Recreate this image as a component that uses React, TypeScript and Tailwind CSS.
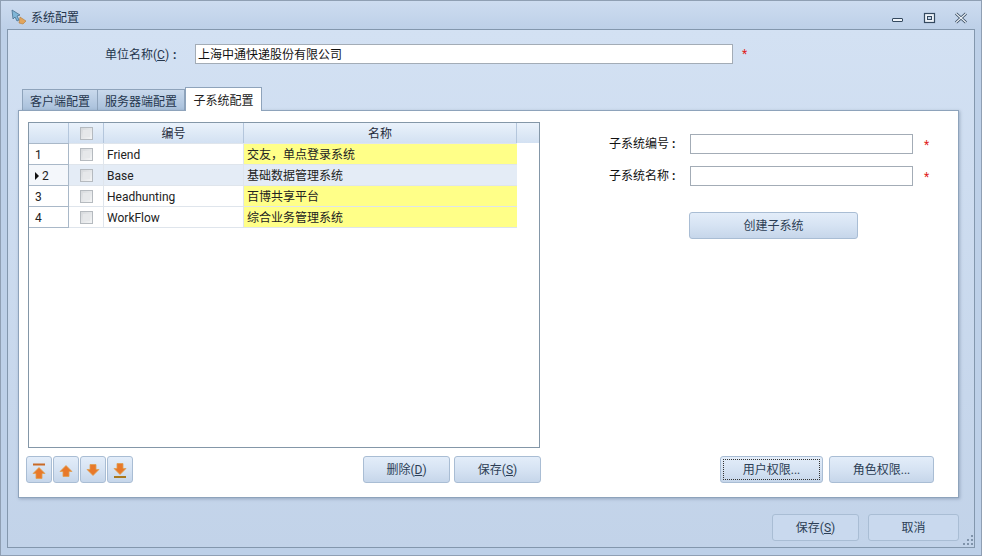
import React from "react";

const FONT = { fontFamily: 'Roboto, "Noto Sans CJK SC", sans-serif' };

function Btn({ children, className = "", focus = false }: { children: React.ReactNode; className?: string; focus?: boolean }) {
  return (
    <div className={`flex items-center justify-center rounded-[3px] border border-[#a9bdd4] bg-gradient-to-b from-[#e3edf9] via-[#d6e3f3] to-[#c6d6ea] text-[12px] text-[#2c3e55] ${className}`}>
      {focus ? (
        <div className="flex h-[calc(100%-4px)] w-[calc(100%-4px)] items-center justify-center border border-dotted border-[#333] pt-[1px]">{children}</div>
      ) : <div className="flex items-center justify-center pt-[1px]">{children}</div>}
    </div>
  );
}

function Check() {
  return <div className="h-[13px] w-[13px] border border-[#b5babf] bg-gradient-to-br from-[#d6d9dc] to-[#f4f5f6] p-[2px]"><div className="h-full w-full bg-[#e6e8ea]" /></div>;
}

function Arrow({ kind }: { kind: "top" | "up" | "down" | "bottom" }) {
  const up = kind === "top" || kind === "up";
  const bar = kind === "top" || kind === "bottom";
  const shape = up ? "M8 3 L14 9 H11 V14 H5 V9 H2 Z" : "M5 2 H11 V7 H14 L8 13 L2 7 H5 Z";
  return (
    <svg width="16" height="17" viewBox="0 0 16 16">
      <path d={shape} transform={kind === "top" ? "translate(0,2)" : kind === "bottom" ? "translate(0,-1)" : undefined} fill="#e8792a" stroke="#e0a050" strokeWidth="0.8" />
      {bar && <rect x="2" y={kind === "top" ? 1 : 13.5} width="12" height="2" fill={kind === "top" ? "#c96a26" : "#a8791f"} />}
    </svg>
  );
}

const rows = [
  { n: "1", code: "Friend", name: "交友，单点登录系统" },
  { n: "2", code: "Base", name: "基础数据管理系统", active: true },
  { n: "3", code: "Headhunting", name: "百博共享平台" },
  { n: "4", code: "WorkFlow", name: "综合业务管理系统" },
];

const headCell = "flex items-center justify-center border-r border-[#b4c6dc] bg-gradient-to-b from-[#eaf2fb] to-[#d3e1f2] pt-[1px]";

function Grid() {
  return (
    <div className="ml-[2px] h-[326px] w-[512px] border border-[#8497a8] bg-white">
      <div className="flex h-[20px] text-[12px] text-[#1e2a3a]">
        <div className={`${headCell} w-[40px] border-[#8fa3b8]`} />
        <div className={`${headCell} w-[35px]`}><Check /></div>
        <div className={`${headCell} w-[140px]`}>编号</div>
        <div className={`${headCell} w-[273px]`}>名称</div>
        <div className={`${headCell} flex-1 border-r-0`} />
      </div>
      {rows.map((r) => (
        <div key={r.n} className={`flex text-[12px] text-[#222] ${r.n === "4" ? "h-[22px]" : "h-[21px]"}`}>
          <div className={`flex w-[40px] items-center border-t border-r border-[#a9b8c8] pl-[6px] pt-[1px] ${r.active ? "bg-[#f4f7fb]" : "bg-white"} ${r.n === "4" ? "border-b" : ""}`}>
            {r.active ? <span className="mr-[3px] inline-block h-0 w-0 border-y-[4px] border-l-[4px] border-y-transparent border-l-[#111]" /> : null}
            <span>{r.n}</span>
          </div>
          <div className={`flex w-[35px] items-center justify-center border-t border-r border-[#dfe5ec] ${r.active ? "bg-[#e4ecf6]" : "bg-white"} ${r.n === "4" ? "border-b" : ""}`}><Check /></div>
          <div className={`flex w-[140px] items-center border-t border-r border-[#dfe5ec] pl-[3px] pt-[1px] ${r.active ? "bg-[#e4ecf6]" : "bg-white"} ${r.n === "4" ? "border-b" : ""}`}>{r.code}</div>
          <div className={`flex w-[273px] items-center border-t border-[#dfe5ec] pl-[3px] pt-[1px] ${r.active ? "bg-[#e4ecf6]" : "bg-[#ffff88]"} ${r.n === "4" ? "border-b" : ""}`}>{r.name}</div>
        </div>
      ))}
    </div>
  );
}

function FormRow({ label, className = "" }: { label: string; className?: string }) {
  return (
    <div className={`flex h-[20px] items-center ${className}`}>
      <div className="w-[149px] pl-[68px] text-[12px] text-[#111]">{label}<span className="ml-[3px] font-bold">:</span></div>
      <div className="h-[20px] w-[223px] border border-[#a3acb6] bg-white" />
      <div className="ml-[11px] pt-[1px] text-[12px] text-[#e02020]">*</div>
    </div>
  );
}

export default function App() {
  return (
    <div style={FONT} className="relative flex h-[556px] w-[982px] flex-col overflow-hidden border border-[#8f9fb3] bg-[#bdd0e8]">
      <div className="flex h-[28px] shrink-0 items-center bg-gradient-to-b from-[#cddcf0] to-[#bdd0e8] pl-[10px] pr-[13px] pt-[6px]">
        <svg width="16" height="16" viewBox="0 0 16 16" className="-mt-[3px]">
          <path d="M1 1 L9 6 L6 7 L8 11 L6 12 L4 8 L2 10 Z" fill="#7fb6d8" stroke="#47708e" strokeWidth="0.8" />
          <path d="M9 8 L15 12 L12 15 L8 14 Z" fill="#e2a55c" stroke="#b07a3a" strokeWidth="0.6" />
        </svg>
        <span className="ml-[4px] text-[12px] text-[#25364d]">系统配置</span>
        <div className="ml-auto -mt-[1px] flex items-center text-[#2f4560]">
          <svg width="14" height="14" viewBox="0 0 14 14"><rect x="1.5" y="7.5" width="10" height="3" rx="0.5" fill="#eef3f9" stroke="#34495f" /></svg>
          <svg width="14" height="14" viewBox="0 0 14 14" className="ml-[18px]"><rect x="1.5" y="2.5" width="10" height="9" fill="#eef3f9" stroke="#34495f" strokeWidth="1.2" /><rect x="4.5" y="5.5" width="4" height="3" fill="#c6d6ea" stroke="#34495f" /></svg>
          <svg width="14" height="14" viewBox="0 0 14 14" className="ml-[17px]"><path d="M2 2.5 L12 11.5 M12 2.5 L2 11.5" stroke="#34495f" strokeWidth="3" /><path d="M2 2.5 L12 11.5 M12 2.5 L2 11.5" stroke="#eef3f9" strokeWidth="1.2" /></svg>
        </div>
      </div>
      <div className="ml-[6px] mr-[6px] flex h-[519px] shrink-0 flex-col border border-[#8397ad] bg-gradient-to-b from-[#d3e1f3] to-[#c2d3e9]">
        <div className="mt-[14px] flex h-[20px] shrink-0 items-center text-[12px] text-[#25364d]">
          <div className="ml-[97px] w-[90px] pt-[1px]">单位名称(<span className="underline">C</span>)<span className="ml-[4px] font-bold">:</span></div>
          <div className="flex h-[20px] w-[538px] items-center border border-[#a3acb6] bg-white pl-[2px] pt-[1px] text-[#111]">上海中通快递股份有限公司</div>
          <div className="ml-[9px] text-[#e02020]">*</div>
        </div>
        <div className="ml-[14px] mt-[22px] flex h-[24px] shrink-0 items-end text-[12px] text-[#25364d]">
          <div className="flex h-[21px] w-[76px] items-center justify-center border border-b-0 border-[#8ea3bb] bg-gradient-to-b from-[#c9d9ec] to-[#a9c0db] pt-[3px]">客户端配置</div>
          <div className="flex h-[21px] w-[87px] items-center justify-center border border-b-0 border-l-0 border-[#8ea3bb] bg-gradient-to-b from-[#c9d9ec] to-[#a9c0db] pt-[3px]">服务器端配置</div>
          <div className="z-10 -mb-[1px] flex h-[24px] w-[77px] items-center justify-center border border-b-0 border-[#8ea3bb] bg-white pt-[2px] text-[#222]">子系统配置</div>
        </div>
        <div className="ml-[10px] flex h-[388px] w-[941px] shrink-0 border border-[#8ea3bb] bg-white shadow-[1px_1px_3px_rgba(80,100,130,0.4)]">
          <div className="ml-[7px] flex w-[515px] flex-col pt-[11px]">
            <Grid />
            <div className="mt-[8px] flex h-[27px]">
              {(["top", "up", "down", "bottom"] as const).map((k) => (
                <Btn key={k} className="mr-[1px] w-[26px]"><Arrow kind={k} /></Btn>
              ))}
              <Btn className="ml-auto w-[87px]"><span>删除(<span className="underline">D</span>)</span></Btn>
              <Btn className="ml-[4px] w-[87px]"><span>保存(<span className="underline">S</span>)</span></Btn>
            </div>
          </div>
          <div className="flex flex-1 flex-col pt-[23px]">
            <FormRow label="子系统编号" />
            <FormRow label="子系统名称" className="mt-[12px]" />
            <Btn className="ml-[148px] mt-[26px] h-[27px] w-[169px]">创建子系统</Btn>
            <div className="mt-[217px] flex h-[27px]">
              <Btn focus className="ml-[179px] w-[103px]">用户权限...</Btn>
              <Btn className="ml-[6px] w-[105px]">角色权限...</Btn>
            </div>
          </div>
        </div>
        <div className="ml-[764px] mt-[16px] flex h-[27px]">
          <Btn className="w-[87px] bg-none bg-[#c9d9ee]"><span>保存(<span className="underline">S</span>)</span></Btn>
          <Btn className="ml-[9px] w-[91px] bg-none bg-[#c9d9ee]">取消</Btn>
        </div>
      </div>
      <svg width="11" height="11" viewBox="0 0 11 11" className="absolute bottom-[9px] right-[7px]">
        <g fill="#7f93aa">
          <rect x="8" y="0" width="2" height="2" /><rect x="4" y="4" width="2" height="2" /><rect x="8" y="4" width="2" height="2" /><rect x="0" y="8" width="2" height="2" /><rect x="4" y="8" width="2" height="2" /><rect x="8" y="8" width="2" height="2" />
        </g>
      </svg>
    </div>
  );
}
